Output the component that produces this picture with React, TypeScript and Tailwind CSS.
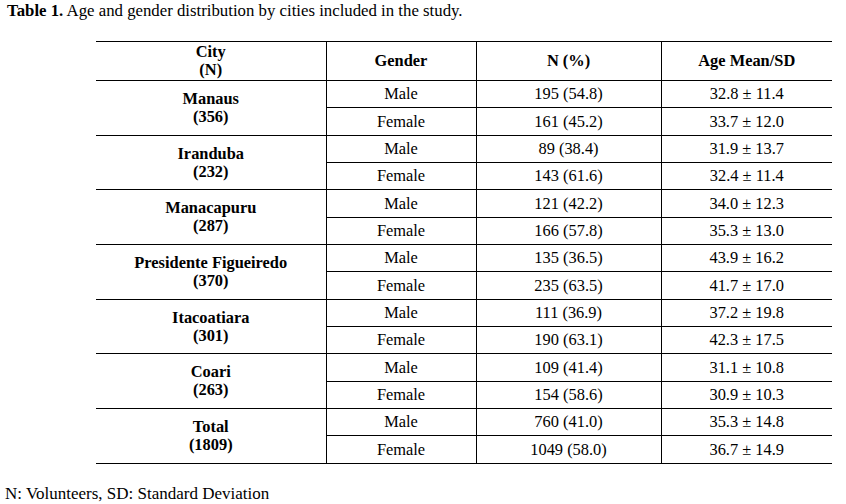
import React from "react";

const groups = [
  { city: "Manaus", n: "356", rows: [["Male", "195 (54.8)", "32.8 ± 11.4"], ["Female", "161 (45.2)", "33.7 ± 12.0"]] },
  { city: "Iranduba", n: "232", rows: [["Male", "89 (38.4)", "31.9 ± 13.7"], ["Female", "143 (61.6)", "32.4 ± 11.4"]] },
  { city: "Manacapuru", n: "287", rows: [["Male", "121 (42.2)", "34.0 ± 12.3"], ["Female", "166 (57.8)", "35.3 ± 13.0"]] },
  { city: "Presidente Figueiredo", n: "370", rows: [["Male", "135 (36.5)", "43.9 ± 16.2"], ["Female", "235 (63.5)", "41.7 ± 17.0"]] },
  { city: "Itacoatiara", n: "301", rows: [["Male", "111 (36.9)", "37.2 ± 19.8"], ["Female", "190 (63.1)", "42.3 ± 17.5"]] },
  { city: "Coari", n: "263", rows: [["Male", "109 (41.4)", "31.1 ± 10.8"], ["Female", "154 (58.6)", "30.9 ± 10.3"]] },
  { city: "Total", n: "1809", rows: [["Male", "760 (41.0)", "35.3 ± 14.8"], ["Female", "1049 (58.0)", "36.7 ± 14.9"]] },
];

export default function App() {
  return (
    <div className="w-[846px] h-[504px] bg-white text-black overflow-hidden" style={{ fontFamily: '"Liberation Serif", "Times New Roman", serif' }}>
      <div className="pl-[7px] pt-[2px] text-[16.8px] leading-[18px]">
        <span className="font-bold">Table 1.</span> Age and gender distribution by cities included in the study.
      </div>
      <table className="ml-[96px] mt-[21px] w-[736px] border-collapse text-[16.4px] leading-[18px]">
        <colgroup>
          <col className="w-[230px]" />
          <col className="w-[150px]" />
          <col className="w-[185px]" />
          <col className="w-[171px]" />
        </colgroup>
        <thead>
          <tr className="h-[39px]">
            <th className="border-t border-b border-r border-black font-bold text-center align-middle p-0">
              City<br />(N)
            </th>
            <th className="border-t border-b border-r border-black font-bold text-center align-middle p-0">Gender</th>
            <th className="border-t border-b border-r border-black font-bold text-center align-middle p-0">N (%)</th>
            <th className="border-t border-b border-black font-bold text-center align-middle p-0">Age Mean/SD</th>
          </tr>
        </thead>
        <tbody>
          {groups.map((g) =>
            g.rows.map((r, i) => (
              <tr key={g.city + i} className="h-[27.35px]">
                {i === 0 && (
                  <td rowSpan={2} className="border-b border-r border-black font-bold text-center align-middle p-0">
                    {g.city}
                    <br />({g.n})
                  </td>
                )}
                <td className="border-b border-r border-black text-center align-middle p-0">{r[0]}</td>
                <td className="border-b border-r border-black text-center align-middle p-0">{r[1]}</td>
                <td className="border-b border-black text-center align-middle p-0">{r[2]}</td>
              </tr>
            ))
          )}
        </tbody>
      </table>
      <div className="pl-[5px] mt-[21px] text-[17px] leading-[18px]">N: Volunteers, SD: Standard Deviation</div>
    </div>
  );
}
